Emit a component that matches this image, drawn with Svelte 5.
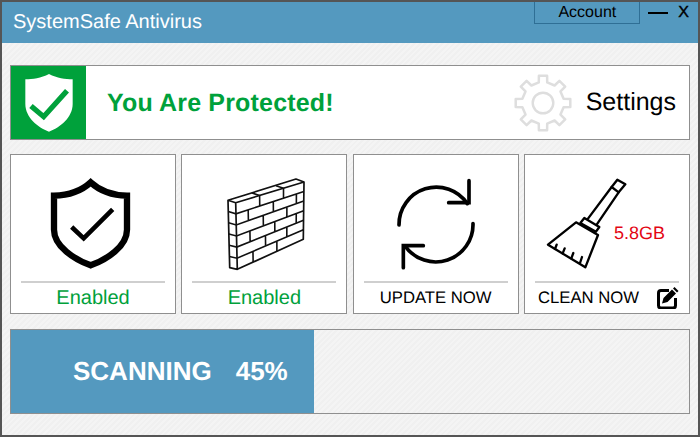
<script>
  // 8 tooth gear outline, first tooth pointing up
  function gearPath(cx, cy, outer, inner) {
    let d = '';
    for (let i = 0; i < 8; i++) {
      const a = (i * Math.PI) / 4 - Math.PI / 2;
      const pts = [
        [inner, -0.2],
        [outer, -0.15],
        [outer, 0.15],
        [inner, 0.2]
      ];
      pts.forEach(([r, off], j) => {
        const x = (cx + r * Math.cos(a + off)).toFixed(1);
        const y = (cy + r * Math.sin(a + off)).toFixed(1);
        d += (i === 0 && j === 0 ? 'M' : 'L') + x + ' ' + y + ' ';
      });
    }
    return d + 'Z';
  }

  // brick wall front face corners
  const B = [9.7, 25.7], D = [78, 5], E = [77.3, 62.3], F = [11.3, 92.3];
  const A = [2, 23.3], G = [3.7, 90.7];

  function front(u, v) {
    const tx = B[0] + (D[0] - B[0]) * u, ty = B[1] + (D[1] - B[1]) * u;
    const bx = F[0] + (E[0] - F[0]) * u, by = F[1] + (E[1] - F[1]) * u;
    return [tx + (bx - tx) * v, ty + (by - ty) * v];
  }

  const joints = [
    [0.35, 0.7],
    [0.18, 0.55, 0.89],
    [0.4, 0.75],
    [0.2, 0.57, 0.89],
    [0.43, 0.75],
    [0.24, 0.6]
  ];

  let wall = '';
  for (let r = 1; r < 6; r++) {
    const v = r / 6;
    const p = front(0, v), q = front(1, v);
    const lx = A[0] + (G[0] - A[0]) * v, ly = A[1] + (G[1] - A[1]) * v;
    wall += `M${lx} ${ly}L${p[0]} ${p[1]}L${q[0]} ${q[1]} `;
  }
  joints.forEach((row, r) => {
    row.forEach(u => {
      const p = front(u, r / 6), q = front(u, (r + 1) / 6);
      wall += `M${p[0]} ${p[1]}L${q[0]} ${q[1]} `;
    });
  });
  // top face joints
  [0.35, 0.7].forEach(u => {
    const p = front(u, 0);
    wall += `M${p[0]} ${p[1]}L${p[0] - 7.5} ${p[1] - 2.4} `;
  });

  const progress = 45;
</script>

<div class="window">
  <header class="titlebar">
    <span class="title">SystemSafe Antivirus</span>
    <div class="controls">
      <button class="account">Account</button>
      <span class="minimize"></span>
      <span class="close">X</span>
    </div>
  </header>

  <main class="content">
    <section class="banner">
      <div class="badge">
        <svg width="48" height="58" viewBox="75 220 142 174">
          <path d="M146 220 C170 232 195 236 217 236 V310 C217 350 180 380 146 393 C112 380 75 350 75 310 V236 C97 236 122 232 146 220 Z" fill="#fff" />
          <path d="M92 316 L130 348 L200 270" fill="none" stroke="#00a13b" stroke-width="16" />
        </svg>
      </div>
      <h1 class="status">You Are Protected!</h1>
      <div class="settings">
        <svg width="60" height="60" viewBox="0 0 60 60">
          <path d={gearPath(30, 30, 27.6, 21)} fill="none" stroke="#dedede" stroke-width="2.5" stroke-linejoin="round" />
          <circle cx="30" cy="30" r="10.3" fill="none" stroke="#dedede" stroke-width="2.4" />
        </svg>
        <span>Settings</span>
      </div>
    </section>

    <section class="cards">
      <div class="card">
        <div class="icon shield">
          <svg width="82" height="92" viewBox="151 85 246 276">
            <path d="M273 98 C245 124 205 137 163 138 V240 C163 290 225 330 273 347 C321 330 382 290 382 240 V138 C341 137 301 124 273 98 Z" fill="none" stroke="#000" stroke-width="19" />
            <path d="M216 232 L252 266 L339 179" fill="none" stroke="#000" stroke-width="14" />
          </svg>
        </div>
        <div class="label green">Enabled</div>
      </div>

      <div class="card">
        <div class="icon brick">
          <svg width="80" height="95" viewBox="0 0 80 95">
            <path d="M2 23.3 L70 2 L78 5 L9.7 25.7 Z M9.7 25.7 L11.3 92.3 L3.7 90.7 L2 23.3 M78 5 L77.3 62.3 L11.3 92.3" fill="none" stroke="#111" stroke-width="1.7" stroke-linejoin="round" />
            <path d={wall} fill="none" stroke="#111" stroke-width="1.6" />
          </svg>
        </div>
        <div class="label green">Enabled</div>
      </div>

      <div class="card">
        <div class="icon">
          <svg width="82" height="92" viewBox="135 83 246 276">
            <g fill="none" stroke="#000" stroke-width="11" stroke-linecap="round">
              <path d="M147 224 A112 112 0 0 1 352 160" />
              <path d="M357 91 V157 H296" />
              <path d="M369 220 A112 112 0 0 1 166 288" />
              <path d="M160 352 V286 H220" />
            </g>
          </svg>
        </div>
        <div class="label">UPDATE NOW</div>
      </div>

      <div class="card clean">
        <div class="icon">
          <svg width="82" height="92" viewBox="590 85 246 276">
            <g fill="none" stroke="#000" stroke-width="7" stroke-linejoin="round" stroke-linecap="round">
              <path d="M680 218 L746 256 L708 353 L596 285 Z" />
              <path d="M705 205 L750 232 L740 246 L693 220 Z" />
              <path d="M716 207 L787 112 M742 225 L808 128" />
              <path d="M804 90 L828 104 L808 128 L787 112 Z" />
              <path d="M622 285 L617 298 M646 296 L640 311 M672 310 L666 326 M698 322 L692 340" />
            </g>
          </svg>
          <span class="size">5.8GB</span>
        </div>
        <div class="label">
          <span>CLEAN NOW</span>
          <svg width="22" height="22" viewBox="0 0 22 22">
            <path d="M12 3.5 H4 Q1.5 3.5 1.5 6 V18.5 Q1.5 21 4 21 H16 Q18.5 21 18.5 18.5 V11" fill="none" stroke="#000" stroke-width="3" />
            <path d="M5 16.5 L6.5 11 L15 2.5 L19 6.5 L10.5 15 Z M16 1.5 L17.5 0 L21.5 4 L20 5.5 Z" fill="#000" />
          </svg>
        </div>
      </div>
    </section>

    <section class="progress">
      <div class="fill" style="width: {progress * 6.73}px">
        <span>SCANNING</span>
        <span>{progress}%</span>
      </div>
    </section>
  </main>
</div>

<style>
  :global(body) {
    margin: 0;
  }

  .window {
    width: 700px;
    height: 437px;
    box-sizing: border-box;
    border: 2px solid #555;
    font-family: "Liberation Sans", Arial, sans-serif;
    text-rendering: geometricPrecision;
    color: #000;
    background: repeating-linear-gradient(135deg, #f0f0f0 0 2px, #f4f4f4 2px 4px);
    display: flex;
    flex-direction: column;
    overflow: hidden;
  }

  .titlebar {
    height: 41px;
    flex: none;
    background: #5499bf;
    display: flex;
    justify-content: space-between;
    padding: 0 0 0 11px;
  }

  .title {
    color: #fff;
    font-size: 20px;
    line-height: 40px;
  }

  .controls {
    display: flex;
    align-items: flex-start;
  }

  .account {
    width: 106px;
    height: 22px;
    box-sizing: border-box;
    padding: 0;
    background: none;
    border: 1px solid #2f6f95;
    border-top: none;
    font: 16px "Liberation Sans", Arial, sans-serif;
    text-rendering: geometricPrecision;
    color: #000;
  }

  .minimize {
    width: 20px;
    height: 2px;
    background: #000;
    margin: 10px 0 0 8px;
  }

  .close {
    font-size: 16px;
    line-height: 22px;
    margin: 0 9px 0 10px;
    -webkit-text-stroke: 0.4px #000;
  }

  .content {
    flex: 1;
    padding: 22px 8px 0;
    display: flex;
    flex-direction: column;
  }

  .banner {
    height: 75px;
    box-sizing: border-box;
    border: 1px solid #8f8f8f;
    background: #fff;
    display: flex;
    align-items: center;
  }

  .badge {
    width: 75px;
    height: 100%;
    flex: none;
    background: #00a13b;
    display: flex;
    align-items: center;
    justify-content: center;
  }

  .status {
    margin: 1px 0 0 21px;
    font-size: 25px;
    font-weight: 700;
    letter-spacing: 0.17px;
    color: #00a13b;
  }

  .settings {
    margin-left: auto;
    margin-right: 13px;
    display: flex;
    align-items: center;
    gap: 13px;
    font-size: 25px;
  }

  .cards {
    margin-top: 14px;
    display: grid;
    grid-template-columns: 166px 166px 166px 166px;
    justify-content: space-between;
  }

  .card {
    height: 160px;
    box-sizing: border-box;
    border: 1px solid #8f8f8f;
    background: #fff;
    display: flex;
    flex-direction: column;
    padding: 0 10px;
  }

  .icon {
    height: 128px;
    box-sizing: border-box;
    padding-top: 12px;
    border-bottom: 2px solid #cfcfcf;
    display: flex;
    align-items: center;
    justify-content: center;
    position: relative;
  }

  .shield svg {
    margin-right: 4px;
  }

  .brick svg {
    margin-left: 4px;
  }

  .label {
    flex: 1;
    display: flex;
    align-items: center;
    justify-content: center;
    font-size: 16.7px;
  }

  .green {
    font-size: 20px;
    color: #00a13b;
  }

  .clean .label {
    justify-content: space-between;
    padding: 0 0 0 3px;
  }

  .clean .icon {
    justify-content: flex-start;
    padding-left: 11px;
  }

  .size {
    position: absolute;
    left: 79px;
    top: 68px;
    font-size: 18px;
    color: #e30613;
  }

  .progress {
    margin-top: 15px;
    height: 85px;
    box-sizing: border-box;
    border: 1px solid #8f8f8f;
  }

  .fill {
    height: 100%;
    background: #5499bf;
    color: #fff;
    font-size: 26px;
    font-weight: 700;
    display: flex;
    align-items: center;
    gap: 24px;
    padding-left: 62px;
    box-sizing: border-box;
  }
</style>
